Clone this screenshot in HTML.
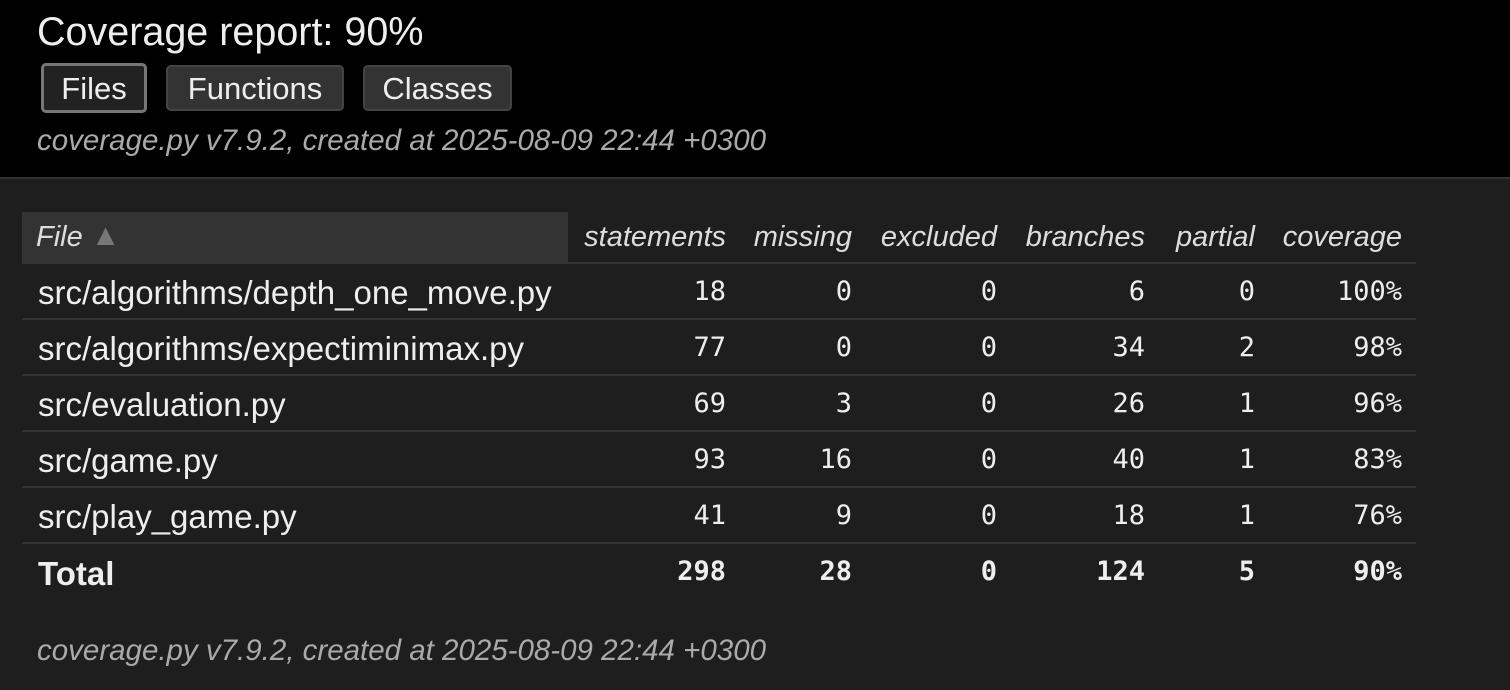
<!DOCTYPE html>
<html><head><style>
*{margin:0;padding:0;box-sizing:border-box}
body{width:1510px;height:690px;background:#1e1e1e;font-family:"Liberation Sans",sans-serif;color:#eee;overflow:hidden;position:relative}
#hdr{position:absolute;left:0;top:0;width:1510px;height:179px;background:#000;border-bottom:2px solid #333}
h1{position:absolute;left:37px;top:10px;font-size:39.5px;font-weight:normal;color:#eee;white-space:nowrap}
.btn{position:absolute;top:65px;height:46px;background:#333;border:2px solid #444;border-radius:5px;color:#eee;font-size:31px;line-height:44px;text-align:center;white-space:nowrap}
.sel{border:3px solid #777;background:#222;top:63px;height:50px;line-height:46px}
.meta{position:absolute;left:37px;font-style:italic;font-size:29.5px;color:#aaa;white-space:nowrap}
table{position:absolute;left:22px;top:212px;border-collapse:collapse;table-layout:fixed}
th{font-style:italic;font-weight:normal;font-size:29px;color:#ddd;height:51px;text-align:right;padding-right:14px;border-bottom:2px solid #333;white-space:nowrap}
th.f{text-align:left;padding-left:14px;background:#333}
td{height:56px;font-family:"DejaVu Sans Mono","Liberation Mono",monospace;font-size:27px;text-align:right;padding-right:14px;border-bottom:2px solid #333;color:#eee}
td.f{font-family:"Liberation Sans",sans-serif;font-size:33px;text-align:left;padding-left:16px;white-space:nowrap;padding-top:4px}
tr.t td{font-weight:bold;border-bottom:none}
</style></head><body>
<div id="hdr">
<h1>Coverage report: 90%</h1>
<div class="btn sel" style="left:41px;width:106px">Files</div>
<div class="btn" style="left:166px;width:178px">Functions</div>
<div class="btn" style="left:363px;width:149px">Classes</div>
<div class="meta" style="top:124px">coverage.py v7.9.2, created at 2025-08-09 22:44 +0300</div>
</div>
<table>
<colgroup><col style="width:546px"><col style="width:172px"><col style="width:126px"><col style="width:145px"><col style="width:148px"><col style="width:110px"><col style="width:147px"></colgroup>
<tr><th class="f">File <span style="font-style:normal;color:#777;font-size:30px;position:relative;top:-1px">▲</span></th><th>statements</th><th>missing</th><th>excluded</th><th>branches</th><th>partial</th><th>coverage</th></tr>
<tr><td class="f">src/algorithms/depth_one_move.py</td><td>18</td><td>0</td><td>0</td><td>6</td><td>0</td><td>100%</td></tr>
<tr><td class="f">src/algorithms/expectiminimax.py</td><td>77</td><td>0</td><td>0</td><td>34</td><td>2</td><td>98%</td></tr>
<tr><td class="f">src/evaluation.py</td><td>69</td><td>3</td><td>0</td><td>26</td><td>1</td><td>96%</td></tr>
<tr><td class="f">src/game.py</td><td>93</td><td>16</td><td>0</td><td>40</td><td>1</td><td>83%</td></tr>
<tr><td class="f">src/play_game.py</td><td>41</td><td>9</td><td>0</td><td>18</td><td>1</td><td>76%</td></tr>
<tr class="t"><td class="f">Total</td><td>298</td><td>28</td><td>0</td><td>124</td><td>5</td><td>90%</td></tr>
</table>
<div class="meta" style="top:634px">coverage.py v7.9.2, created at 2025-08-09 22:44 +0300</div>
</body></html>
